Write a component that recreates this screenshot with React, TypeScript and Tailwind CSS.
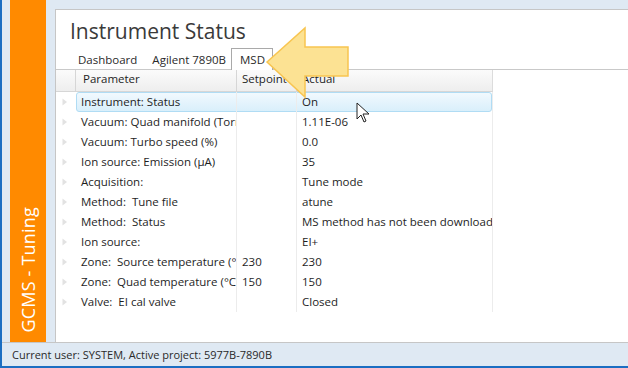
import React from "react"

const rows: [string, string, string][] = [
  ["Instrument: Status", "", "On"],
  ["Vacuum: Quad manifold (Torr)", "", "1.11E-06"],
  ["Vacuum: Turbo speed (%)", "", "0.0"],
  ["Ion source: Emission (µA)", "", "35"],
  ["Acquisition:", "", "Tune mode"],
  ["Method:  Tune file", "", "atune"],
  ["Method:  Status", "", "MS method has not been downloaded"],
  ["Ion source:", "", "EI+"],
  ["Zone:  Source temperature (°C)", "230", "230"],
  ["Zone:  Quad temperature (°C)", "150", "150"],
  ["Valve:  EI cal valve", "", "Closed"],
]

const font = "font-['Open_Sans','Noto_Sans',sans-serif]"

function Triangle() {
  return (
    <svg width="6" height="8" viewBox="0 0 6 8" className="shrink-0">
      <path d="M0.5 0.5 L5 4 L0.5 7.5 Z" fill="#e2e2e2" />
    </svg>
  )
}

export default function App() {
  return (
    <div className={`relative w-[628px] h-[368px] bg-[#dfe9f3] border-l-2 border-b-2 border-[#1b6ec2] flex flex-col overflow-hidden ${font}`}>
      <div className="flex h-[342px] shrink-0">
        {/* orange side tab */}
        <div className="ml-[8px] w-[36px] h-[342px] bg-[#ff8a00] flex items-end justify-center pb-[9px]">
          <span className="[writing-mode:vertical-rl] rotate-180 text-white text-[18px] leading-none tracking-[0.2px]">GCMS - Tuning</span>
        </div>

        {/* main panel */}
        <div className="ml-[9px] mt-[9px] h-[333px] flex-1 bg-white border-l border-t border-[#c6c6c6] flex flex-col">
          <div className="h-[37px] pl-[14px] pt-[7px] text-[21px] leading-[28px] text-[#3a3a3a]">Instrument Status</div>

          <div className="flex items-end h-[23px] text-[11.5px] leading-[16px] text-[#2a2a2a] border-b border-[#c9c9c9]">
            <span className="ml-[22px] mb-[1px]">Dashboard</span>
            <span className="ml-[15px] mb-[1px]">Agilent 7890B</span>
            <span className="ml-[5px] h-[22px] -mb-px w-[42px] pl-[8px] pt-[3px] bg-white border border-b-0 border-[#a9a9a9]">MSD</span>
          </div>

          <div className="w-[437px] flex flex-col text-[11.5px] text-[#1e1e1e]">
            {/* header */}
            <div className="flex h-[22px] bg-gradient-to-b from-[#fbfbfb] to-[#eeeeee] border-b border-[#d6d6d6] border-r border-r-[#dcdcdc]">
              <div className="w-[20px] border-r border-[#d6d6d6]" />
              <div className="w-[161px] pl-[7px] leading-[17px] border-r border-[#d6d6d6] overflow-hidden whitespace-pre">Parameter</div>
              <div className="w-[60px] pl-[5px] leading-[17px] border-r border-[#d6d6d6] overflow-hidden whitespace-pre">Setpoint</div>
              <div className="flex-1 pl-[5px] leading-[17px]">Actual</div>
            </div>

            {rows.map((r, i) => (
              <div key={i} className="relative flex h-[20px] border-r border-[#ececec]">
                <div className="w-[20px] flex items-center pl-[6px]">
                  <Triangle />
                </div>
                {i === 0 && (
                  <div className="absolute left-[20px] right-0 top-0 bottom-0 rounded-[3px] border border-[#b0dcf4] bg-gradient-to-b from-[#f1f9fe] to-[#d9effb]" />
                )}
                <div className="relative w-[161px] pl-[5px] leading-[20px] border-r border-[#ececec] overflow-hidden whitespace-pre">{r[0]}</div>
                <div className="relative w-[60px] pl-[5px] leading-[20px] border-r border-[#ececec] overflow-hidden whitespace-pre">{r[1]}</div>
                <div className="relative flex-1 pl-[5px] leading-[20px] overflow-hidden whitespace-pre">{r[2]}</div>
              </div>
            ))}
          </div>
        </div>
      </div>

      {/* status bar */}
      <div className="h-[24px] pl-[10px] text-[11px] leading-[23px] text-[#2a2a2a] border-t border-[#c6c6c6]">
        Current user: SYSTEM, Active project: 5977B-7890B
      </div>

      {/* callout arrow */}
      <svg className="absolute left-0 top-0 pointer-events-none" width="628" height="368">
        <path d="M265 62 L303 28 L303 47 L346 47 L346 76 L303 76 L303 97 Z" fill="#fce293" stroke="#f8c550" strokeWidth="1.5" strokeLinejoin="miter" />
        {/* mouse cursor */}
        <path d="M355 103 L355 119 L359 115 L362 122 L364 121 L361 114 L367 114 Z" fill="#ffffff" stroke="#222222" strokeWidth="1" strokeLinejoin="round" />
      </svg>
    </div>
  )
}
